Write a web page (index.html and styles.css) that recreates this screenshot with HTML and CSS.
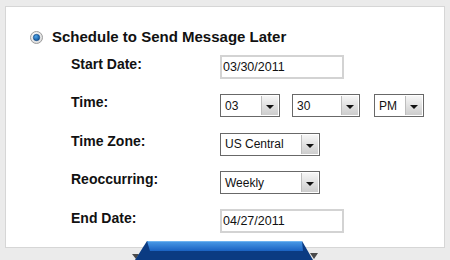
FILE: index.html
```html
<!DOCTYPE html>
<html>
<head>
<meta charset="utf-8">
<link rel="stylesheet" href="styles.css">
</head>
<body>
<div class="frame">
  <div class="panel">
    <div class="title-row">
      <svg class="radio" width="13" height="13" viewBox="0 0 13 13">
        <defs>
          <radialGradient id="rg" cx="0.4" cy="0.35" r="0.7">
            <stop offset="0" stop-color="#ffffff"/>
            <stop offset="1" stop-color="#d8d8d8"/>
          </radialGradient>
          <radialGradient id="dot" cx="0.4" cy="0.35" r="0.7">
            <stop offset="0" stop-color="#4fa6ea"/>
            <stop offset="1" stop-color="#0d4f96"/>
          </radialGradient>
        </defs>
        <circle cx="6.5" cy="6.5" r="6" fill="url(#rg)" stroke="#9c9c9c" stroke-width="1"/>
        <circle cx="6.5" cy="6.5" r="3.2" fill="url(#dot)" stroke="#0b3f78" stroke-width="0.6"/>
      </svg>
      <span class="title">Schedule to Send Message Later</span>
    </div>
    <div class="form">
      <label class="lbl">Start Date:</label>
      <div class="ctl"><input class="date" type="text" value="03/30/2011" readonly></div>

      <label class="lbl">Time:</label>
      <div class="ctl time">
        <div class="sel w60"><span class="val">03</span><span class="btn"><i class="tri"></i></span></div>
        <div class="sel w68"><span class="val">30</span><span class="btn"><i class="tri"></i></span></div>
        <div class="sel w50"><span class="val">PM</span><span class="btn"><i class="tri"></i></span></div>
      </div>

      <label class="lbl">Time Zone:</label>
      <div class="ctl">
        <div class="sel w100"><span class="val">US Central</span><span class="btn"><i class="tri"></i></span></div>
      </div>

      <label class="lbl">Reoccurring:</label>
      <div class="ctl">
        <div class="sel w100"><span class="val">Weekly</span><span class="btn"><i class="tri"></i></span></div>
      </div>

      <label class="lbl">End Date:</label>
      <div class="ctl"><input class="date" type="text" value="04/27/2011" readonly></div>
    </div>
  </div>
  <svg class="tab" width="192" height="21" viewBox="128 239 192 21">
    <defs>
      <linearGradient id="face" x1="0" y1="0" x2="0" y2="1">
        <stop offset="0" stop-color="#4b9ce8"/>
        <stop offset="1" stop-color="#1a62c2"/>
      </linearGradient>
    </defs>
    <polygon points="132,254 139,254 136,259" fill="#4a4a4a"/>
    <polygon points="310,253 318,253 314,259" fill="#4a4a4a"/>
    <polygon points="135,260 147,241 302,241 313,260" fill="#0b3b82"/>
    <polygon points="147,241 302,241 303,251 150,251" fill="url(#face)"/>
    <line x1="148" y1="241.5" x2="302" y2="241.5" stroke="#6fb3f0" stroke-width="1"/>
  </svg>
</div>
</body>
</html>
```
FILE: styles.css
```css
html, body {
  margin: 0;
  padding: 0;
  background: #ebebeb;
}

.frame {
  position: relative;
  width: 450px;
  height: 260px;
  box-sizing: border-box;
  padding: 6px 5px 12px 5px;
  background: #ebebeb;
  font-family: "Liberation Sans", Arial, sans-serif;
  color: #111;
}

.panel {
  height: 100%;
  box-sizing: border-box;
  background: #fff;
  border: 1px solid #d6d6d6;
  padding: 19px 0 0 24px;
}

.title-row {
  height: 22px;
  display: flex;
  align-items: center;
  gap: 9px;
}

.radio {
  display: block;
  flex: none;
}

.title {
  font-size: 15px;
  font-weight: bold;
  margin-top: -1px;
}

.form {
  margin-left: 41px;
  display: grid;
  grid-template-columns: 149px auto;
  grid-auto-rows: 38.5px;
}

.lbl {
  align-self: center;
  font-size: 14px;
  font-weight: bold;
  margin-bottom: 7px;
}

.ctl {
  display: flex;
  align-items: center;
}

.time {
  gap: 12px;
}

.time .w50 {
  margin-left: 2px;
}

.date {
  box-sizing: border-box;
  width: 124px;
  height: 24px;
  margin: 0;
  border: 2px solid #d3d3d3;
  padding: 0 1px;
  font-family: "Liberation Sans", Arial, sans-serif;
  font-size: 12.5px;
  color: #111;
  background: #fff;
  outline: none;
}

.sel {
  box-sizing: border-box;
  height: 23px;
  border: 1px solid #686868;
  background: #fff;
  display: flex;
  align-items: stretch;
  font-size: 12px;
}

.w60 { width: 60px; }
.w68 { width: 68px; }
.w50 { width: 50px; }
.w100 { width: 100px; }

.val {
  flex: 1;
  padding-left: 4px;
  display: flex;
  align-items: center;
  color: #111;
}

.btn {
  width: 16px;
  margin: 1px;
  background: linear-gradient(#f6f6f6, #cdcdcd);
  border-left: 1px solid #bdbdbd;
  display: flex;
  align-items: center;
  justify-content: center;
}

.tri {
  display: block;
  width: 0;
  height: 0;
  margin-top: 3px;
  border-left: 4px solid transparent;
  border-right: 4px solid transparent;
  border-top: 4px solid #111;
}

.tab {
  position: absolute;
  left: 128px;
  top: 239px;
  display: block;
}
```
